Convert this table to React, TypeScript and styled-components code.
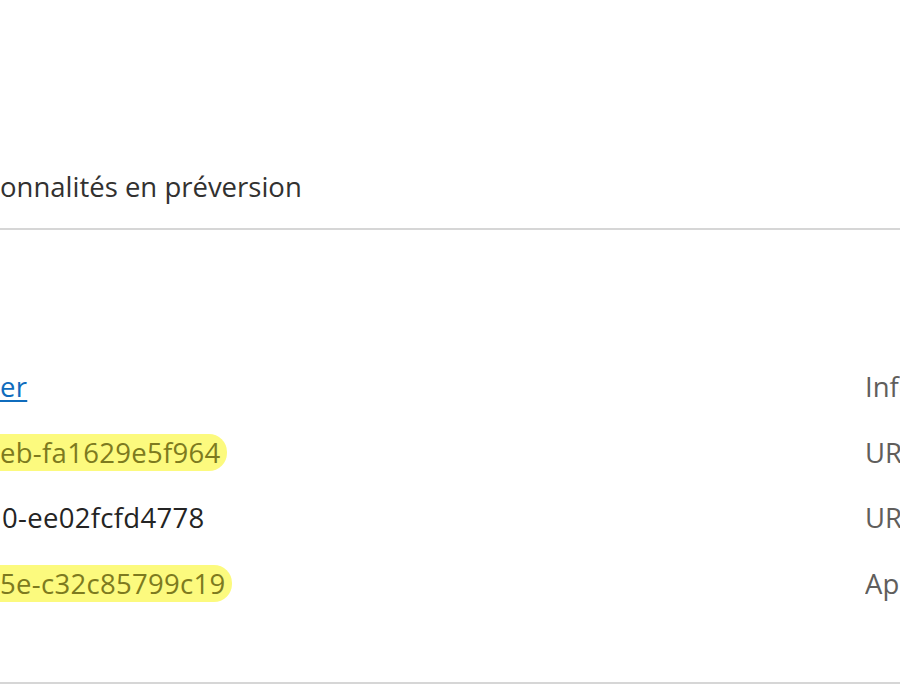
import React from "react";
import styled, { createGlobalStyle } from "styled-components";

const Global = createGlobalStyle`
  html, body { margin: 0; padding: 0; background: #ffffff; overflow: hidden; }
  body { font-family: "Open Sans", "Noto Sans", "Liberation Sans", sans-serif; }
`;

const Page = styled.div`
  width: 900px;
  height: 700px;
  overflow: hidden;
  display: flex;
  flex-direction: column;
`;

const Header = styled.div`
  padding-top: 169px;
  padding-bottom: 23px;
  border-bottom: 2px solid #d6d6d6;
`;

const Title = styled.div`
  font-size: 27.5px;
  line-height: 36px;
  color: #323130;
  white-space: nowrap;
`;

const Section = styled.div`
  padding-top: 124px;
  padding-bottom: 66px;
  border-bottom: 2px solid #d6d6d6;
`;

const Row = styled.div`
  display: grid;
  grid-template-columns: 865px 1fr;
  height: 65.5px;
  align-items: center;
  font-size: 27.5px;
  letter-spacing: 0.3px;
  white-space: nowrap;
`;

const Value = styled.div<{ $indent?: number }>`
  padding-left: ${(p) => p.$indent ?? 0}px;
  color: #242424;
  overflow: hidden;
`;

const Link = styled.a`
  color: #0f6cbd;
  text-decoration: underline;
  text-underline-offset: 3px;
`;

const Highlight = styled.span`
  display: inline-block;
  background: #fcfa7e;
  color: #7d7a1f;
  line-height: 37px;
  padding: 0 6px 0 20px;
  margin-left: -20px;
  border-radius: 18px;
`;

const Label = styled.div`
  color: #605e5c;
  overflow: hidden;
  letter-spacing: 0;
`;

const rows: { value: React.ReactNode; label: string; indent?: number }[] = [
  { value: <Link href="#">er</Link>, label: "Informations d'identification du client" },
  { value: <Highlight>eb-fa1629e5f964</Highlight>, label: "URI de redirection" },
  { value: "0-ee02fcfd4778", label: "URI d'ID d'application", indent: 2 },
  { value: <Highlight>5e-c32c85799c19</Highlight>, label: "Application managée dans l'annuaire local" },
];

export default function App() {
  return (
    <Page>
      <Global />
      <Header>
        <Title>onnalités en préversion</Title>
      </Header>
      <Section>
        {rows.map((r, i) => (
          <Row key={i}>
            <Value $indent={r.indent}>{r.value}</Value>
            <Label>{r.label}</Label>
          </Row>
        ))}
      </Section>
    </Page>
  );
}
